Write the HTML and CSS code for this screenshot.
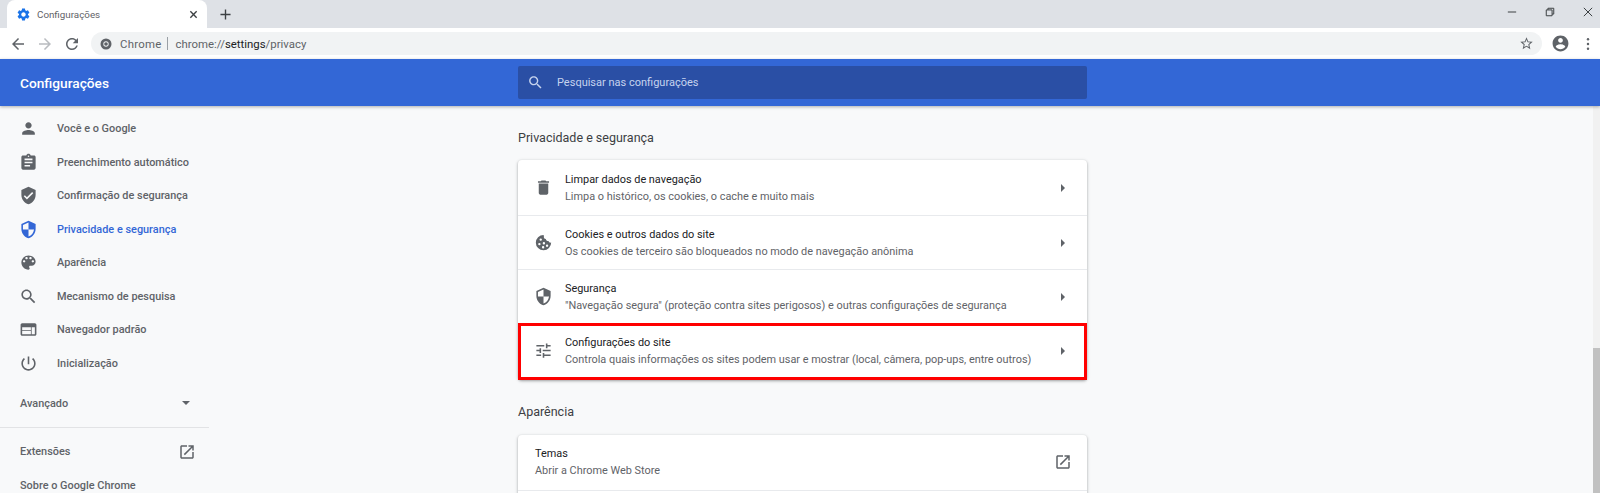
FILE: index.html
```html
<!DOCTYPE html>
<html lang="pt-BR">
<head>
    <meta charset="UTF-8">
    <title>Configurações</title>
    <link rel="stylesheet" href="styles.css">
</head>
<body>
<svg class="defs" width="0" height="0">
    <symbol id="i-gear" viewBox="0 0 24 24"><path d="M19.14 12.94c.04-.3.06-.61.06-.94 0-.32-.02-.64-.07-.94l2.03-1.58c.18-.14.23-.41.12-.61l-1.92-3.32c-.12-.22-.37-.29-.59-.22l-2.39.96c-.5-.38-1.03-.7-1.62-.94l-.36-2.54c-.04-.24-.24-.41-.48-.41h-3.84c-.24 0-.43.17-.47.41l-.36 2.54c-.59.24-1.13.57-1.62.94l-2.39-.96c-.22-.08-.47 0-.59.22L2.74 8.87c-.12.21-.08.47.12.61l2.03 1.58c-.05.3-.09.63-.09.94s.02.64.07.94l-2.03 1.58c-.18.14-.23.41-.12.61l1.92 3.32c.12.22.37.29.59.22l2.39-.96c.5.38 1.03.7 1.62.94l.36 2.54c.05.24.24.41.48.41h3.84c.24 0 .44-.17.47-.41l.36-2.54c.59-.24 1.13-.56 1.62-.94l2.39.96c.22.08.47 0 .59-.22l1.92-3.32c.12-.22.07-.47-.12-.61l-2.01-1.58zM12 15.6c-1.98 0-3.6-1.62-3.6-3.6s1.62-3.6 3.6-3.6 3.6 1.62 3.6 3.6-1.62 3.6-3.6 3.6z"/></symbol>
    <symbol id="i-person" viewBox="0 0 24 24"><path d="M12 12c2.21 0 4-1.79 4-4s-1.79-4-4-4-4 1.79-4 4 1.79 4 4 4zm0 2c-2.67 0-8 1.34-8 4v2h16v-2c0-2.66-5.33-4-8-4z"/></symbol>
    <symbol id="i-assignment" viewBox="0 0 24 24"><path d="M19 3h-4.18C14.4 1.84 13.3 1 12 1c-1.3 0-2.4.84-2.82 2H5c-1.1 0-2 .9-2 2v14c0 1.1.9 2 2 2h14c1.1 0 2-.9 2-2V5c0-1.1-.9-2-2-2zm-7 0c.55 0 1 .45 1 1s-.45 1-1 1-1-.45-1-1 .45-1 1-1zm2 14H7v-2h7v2zm3-4H7v-2h10v2zm0-4H7V7h10v2z"/></symbol>
    <symbol id="i-verified" viewBox="0 0 24 24"><path d="M12 1L3 5v6c0 5.55 3.84 10.74 9 12 5.16-1.26 9-6.45 9-12V5l-9-4zm-2 16l-4-4 1.41-1.41L10 14.17l6.59-6.59L18 9l-8 8z"/></symbol>
    <symbol id="i-security" viewBox="0 0 24 24"><path d="M12 1L3 5v6c0 5.55 3.84 10.74 9 12 5.16-1.26 9-6.45 9-12V5l-9-4zm0 10.99h7c-.53 4.12-3.28 7.79-7 8.94V12H5V6.3l7-3.11v8.8z"/></symbol>
    <symbol id="i-palette" viewBox="0 0 24 24"><path d="M12 3c-4.97 0-9 4.03-9 9s4.03 9 9 9c.83 0 1.5-.67 1.5-1.5 0-.39-.15-.74-.39-1.01-.23-.26-.38-.61-.38-.99 0-.83.67-1.5 1.5-1.5H16c2.76 0 5-2.24 5-5 0-4.42-4.03-8-9-8zm-5.5 9c-.83 0-1.5-.67-1.5-1.5S5.67 9 6.5 9 8 9.67 8 10.5 7.33 12 6.5 12zm3-4C8.67 8 8 7.33 8 6.5S8.67 5 9.5 5s1.5.67 1.5 1.5S10.33 8 9.5 8zm5 0c-.83 0-1.5-.67-1.5-1.5S13.67 5 14.5 5s1.5.67 1.5 1.5S15.33 8 14.5 8zm3 4c-.83 0-1.5-.67-1.5-1.5S16.67 9 17.5 9s1.5.67 1.5 1.5-.67 1.5-1.5 1.5z"/></symbol>
    <symbol id="i-search" viewBox="0 0 24 24"><path d="M15.5 14h-.79l-.28-.27C15.41 12.59 16 11.11 16 9.5 16 5.91 13.09 3 9.5 3S3 5.91 3 9.5 5.91 16 9.5 16c1.61 0 3.09-.59 4.23-1.57l.27.28v.79l5 4.99L20.49 19l-4.99-5zm-6 0C7.01 14 5 11.99 5 9.5S7.01 5 9.5 5 14 7.01 14 9.5 11.99 14 9.5 14z"/></symbol>
    <symbol id="i-web" viewBox="0 0 24 24"><path d="M20 4H4c-1.1 0-1.99.9-1.99 2L2 18c0 1.1.9 2 2 2h16c1.1 0 2-.9 2-2V6c0-1.1-.9-2-2-2zm-5 14H4v-4h11v4zm0-5H4V9h11v4zm5 5h-4V9h4v9z"/></symbol>
    <symbol id="i-power" viewBox="0 0 24 24"><path d="M13 3h-2v10h2V3zm4.83 2.17l-1.42 1.42C17.99 7.86 19 9.81 19 12c0 3.87-3.13 7-7 7s-7-3.13-7-7c0-2.19 1.01-4.14 2.58-5.42L6.17 5.17C4.23 6.82 3 9.26 3 12c0 4.97 4.03 9 9 9s9-4.03 9-9c0-2.74-1.23-5.18-3.17-6.83z"/></symbol>
    <symbol id="i-open" viewBox="0 0 24 24"><path d="M19 19H5V5h7V3H5c-1.11 0-2 .9-2 2v14c0 1.1.89 2 2 2h14c1.1 0 2-.9 2-2v-7h-2v7zM14 3v2h3.59l-9.83 9.83 1.41 1.41L19 6.41V10h2V3h-7z"/></symbol>
    <symbol id="i-delete" viewBox="0 0 24 24"><path d="M6 19c0 1.1.9 2 2 2h8c1.1 0 2-.9 2-2V7H6v12zM19 4h-3.5l-1-1h-5l-1 1H5v2h14V4z"/></symbol>
    <symbol id="i-tune" viewBox="0 0 24 24"><path d="M3 17v2h6v-2H3zM3 5v2h10V5H3zm10 16v-2h8v-2h-8v-2h-2v6h2zM7 9v2H3v2h4v2h2V9H7zm14 4v-2H11v2h10zm-6-4h2V7h4V5h-4V3h-2v6z"/></symbol>
    <symbol id="i-cookie" viewBox="0 0 24 24"><path fill-rule="evenodd" d="M12 2.5a9.7 9.7 0 1 0 9.7 9.6c-1.6.4-3-.5-3.3-2-1.7.3-3.3-.8-3.5-2.6-1.7-.1-2.8-1.6-2.4-3.2-.1-.9-.3-1.8-.5-1.8zM8.5 6.8a1.5 1.5 0 1 1 0 3 1.5 1.5 0 0 1 0-3zM6.8 12.5a1.5 1.5 0 1 1 0 3 1.5 1.5 0 0 1 0-3zM12.5 11.5a1.5 1.5 0 1 1 0 3 1.5 1.5 0 0 1 0-3zM11.5 16.5a1.5 1.5 0 1 1 0 3 1.5 1.5 0 0 1 0-3zM16.5 14.5a1.5 1.5 0 1 1 0 3 1.5 1.5 0 0 1 0-3z"/></symbol>
    <symbol id="i-back" viewBox="0 0 24 24"><path d="M20 11H7.83l5.59-5.59L12 4l-8 8 8 8 1.41-1.41L7.83 13H20v-2z"/></symbol>
    <symbol id="i-forward" viewBox="0 0 24 24"><path d="M12 4l-1.41 1.41L16.17 11H4v2h12.17l-5.58 5.59L12 20l8-8z"/></symbol>
    <symbol id="i-reload" viewBox="0 0 24 24"><path d="M17.65 6.35C16.2 4.9 14.21 4 12 4c-4.42 0-7.99 3.58-7.99 8s3.57 8 7.99 8c3.73 0 6.84-2.55 7.73-6h-2.08c-.82 2.33-3.04 4-5.65 4-3.31 0-6-2.69-6-6s2.69-6 6-6c1.66 0 3.14.69 4.22 1.78L13 11h7V4l-2.35 2.35z"/></symbol>
    <symbol id="i-star" viewBox="0 0 24 24"><path d="M22 9.24l-7.19-.62L12 2 9.19 8.63 2 9.24l5.46 4.73L5.82 21 12 17.27 18.18 21l-1.63-7.03L22 9.24zM12 15.4l-3.76 2.27 1-4.28-3.32-2.88 4.38-.38L12 6.1l1.71 4.04 4.38.38-3.32 2.88 1 4.28L12 15.4z"/></symbol>
    <symbol id="i-account" viewBox="0 0 24 24"><path d="M12 2C6.48 2 2 6.48 2 12s4.48 10 10 10 10-4.48 10-10S17.52 2 12 2zm0 3c1.66 0 3 1.34 3 3s-1.34 3-3 3-3-1.34-3-3 1.34-3 3-3zm0 14.2c-2.5 0-4.71-1.28-6-3.22.03-1.99 4-3.08 6-3.08 1.99 0 5.97 1.09 6 3.08-1.29 1.94-3.5 3.22-6 3.22z"/></symbol>
</svg>

<div class="tabstrip">
    <div class="tab">
        <svg class="tab-icon"><use href="#i-gear"/></svg>
        <span class="tab-title">Configurações</span>
        <svg class="tab-close" viewBox="0 0 10 10"><path d="M1.5 1.5l7 7M8.5 1.5l-7 7"/></svg>
    </div>
    <svg class="new-tab" viewBox="0 0 12 12"><path d="M6 .5v11M.5 6h11"/></svg>
    <div class="window-btns">
        <svg class="win-btn" viewBox="0 0 12 12"><path d="M1 6h10"/></svg>
        <svg class="win-btn" viewBox="0 0 12 12"><path d="M1.5 3.5h7v7h-7zM3.5 3.5v-2h7v7h-2"/></svg>
        <svg class="win-btn" viewBox="0 0 12 12"><path d="M1 1l10 10M11 1L1 11"/></svg>
    </div>
</div>

<div class="toolbar">
    <svg class="nav-icon"><use href="#i-back"/></svg>
    <svg class="nav-icon disabled"><use href="#i-forward"/></svg>
    <svg class="nav-icon"><use href="#i-reload"/></svg>
    <div class="omnibox">
        <svg class="chrome-logo" viewBox="0 0 12 12"><circle cx="6" cy="6" r="5.5"/><circle class="hole" cx="6" cy="6" r="2.7"/><circle cx="6" cy="6" r="1.8"/></svg>
        <span class="omni-label">Chrome</span>
        <span class="omni-sep"></span>
        <span class="omni-url">chrome://<b>settings</b>/privacy</span>
        <svg class="star"><use href="#i-star"/></svg>
    </div>
    <svg class="account"><use href="#i-account"/></svg>
    <svg class="menu-dots" viewBox="0 0 4 16"><circle cx="2" cy="2.5" r="1.4"/><circle cx="2" cy="8" r="1.4"/><circle cx="2" cy="13.5" r="1.4"/></svg>
</div>

<header class="settings-header">
    <h1>Configurações</h1>
    <div class="searchbox">
        <svg><use href="#i-search"/></svg>
        <span>Pesquisar nas configurações</span>
    </div>
</header>

<div class="content">
    <nav class="sidebar">
        <a class="nav-item"><svg><use href="#i-person"/></svg>Você e o Google</a>
        <a class="nav-item"><svg><use href="#i-assignment"/></svg>Preenchimento automático</a>
        <a class="nav-item"><svg><use href="#i-verified"/></svg>Confirmação de segurança</a>
        <a class="nav-item active"><svg><use href="#i-security"/></svg>Privacidade e segurança</a>
        <a class="nav-item"><svg><use href="#i-palette"/></svg>Aparência</a>
        <a class="nav-item"><svg><use href="#i-search"/></svg>Mecanismo de pesquisa</a>
        <a class="nav-item"><svg><use href="#i-web"/></svg>Navegador padrão</a>
        <a class="nav-item"><svg><use href="#i-power"/></svg>Inicialização</a>
        <a class="nav-plain advanced">Avançado<span class="caret"></span></a>
        <hr class="nav-line">
        <a class="nav-plain">Extensões<svg><use href="#i-open"/></svg></a>
        <a class="nav-plain">Sobre o Google Chrome</a>
    </nav>

    <main class="main">
        <h2 class="section-title">Privacidade e segurança</h2>
        <section class="card">
            <div class="row">
                <svg class="row-icon"><use href="#i-delete"/></svg>
                <div class="row-text"><div class="row-name">Limpar dados de navegação</div><div class="row-sub">Limpa o histórico, os cookies, o cache e muito mais</div></div>
                <span class="arrow"></span>
            </div>
            <div class="row">
                <svg class="row-icon"><use href="#i-cookie"/></svg>
                <div class="row-text"><div class="row-name">Cookies e outros dados do site</div><div class="row-sub">Os cookies de terceiro são bloqueados no modo de navegação anônima</div></div>
                <span class="arrow"></span>
            </div>
            <div class="row">
                <svg class="row-icon"><use href="#i-security"/></svg>
                <div class="row-text"><div class="row-name">Segurança</div><div class="row-sub">"Navegação segura" (proteção contra sites perigosos) e outras configurações de segurança</div></div>
                <span class="arrow"></span>
            </div>
            <div class="row marked">
                <svg class="row-icon"><use href="#i-tune"/></svg>
                <div class="row-text"><div class="row-name">Configurações do site</div><div class="row-sub">Controla quais informações os sites podem usar e mostrar (local, câmera, pop-ups, entre outros)</div></div>
                <span class="arrow"></span>
            </div>
        </section>

        <h2 class="section-title second">Aparência</h2>
        <section class="card">
            <div class="row plain">
                <div class="row-text"><div class="row-name">Temas</div><div class="row-sub">Abrir a Chrome Web Store</div></div>
                <svg class="row-open"><use href="#i-open"/></svg>
            </div>
            <div class="row plain"></div>
        </section>
    </main>

    <div class="scrollbar"><div class="thumb"></div></div>
</div>
</body>
</html>
```

FILE: styles.css
```css
html, body {
    margin: 0;
    height: 493px;
    overflow: hidden;
}

body {
    font-family: Roboto, "Liberation Sans", sans-serif;
    background-color: #f8f9fa;
    color: #202124;
    display: flex;
    flex-direction: column;
}

.defs {
    display: none;
}

svg {
    fill: currentColor;
    flex: none;
}

/* browser frame */
.tabstrip {
    height: 28px;
    flex: none;
    background-color: #dee1e6;
    display: flex;
    align-items: center;
    padding-left: 7px;
}

.tab {
    width: 200px;
    height: 28px;
    box-sizing: border-box;
    background-color: #fff;
    border-radius: 8px 8px 0 0;
    display: flex;
    align-items: center;
    padding: 0 8px 0 9px;
    color: #3c4043;
}

.tab-icon {
    width: 15px;
    height: 15px;
    color: #1a73e8;
}

.tab-title {
    font-size: 9.8px;
    margin-left: 6px;
    flex: 1;
    color: #5f6368;
}

.tab-close {
    width: 9px;
    height: 9px;
    fill: none;
    stroke: #3c4043;
    stroke-width: 1.5;
    margin-right: 1px;
}

.new-tab {
    width: 11px;
    height: 11px;
    margin-left: 13px;
    fill: none;
    stroke: #3c4043;
    stroke-width: 1.5;
}

.window-btns {
    margin-left: auto;
    display: flex;
    gap: 28px;
    padding-right: 7px;
    margin-top: -4px;
}

.win-btn {
    width: 10px;
    height: 10px;
    fill: none;
    stroke: #3c4043;
    stroke-width: 1.2;
}

.toolbar {
    height: 31px;
    flex: none;
    background-color: #fff;
    display: flex;
    align-items: center;
    padding-left: 9px;
    box-sizing: border-box;
}

.nav-icon {
    width: 18px;
    height: 18px;
    color: #5f6368;
    margin-right: 9px;
}

.nav-icon.disabled {
    color: #b9bcc0;
}

.omnibox {
    margin-left: 1px;
    width: 1451px;
    height: 23px;
    border-radius: 12px;
    background-color: #f1f3f4;
    display: flex;
    align-items: center;
    padding: 0 8px 0 8px;
    box-sizing: border-box;
    font-size: 11.4px;
    color: #5f6368;
}

.chrome-logo {
    width: 12px;
    height: 12px;
    margin-left: 1px;
    color: #5f6368;
}

.chrome-logo .hole {
    fill: #f1f3f4;
}

.omni-label {
    margin-left: 8px;
    letter-spacing: .25px;
}

.omni-sep {
    width: 1px;
    height: 13px;
    background-color: #9aa0a6;
    margin: 0 7px 0 6px;
}

.omni-url b {
    font-weight: 400;
    color: #202124;
}

.star {
    width: 15px;
    height: 15px;
    margin-left: auto;
}

.account {
    width: 19px;
    height: 19px;
    margin-left: 9px;
    color: #5f6368;
}

.menu-dots {
    width: 4px;
    height: 14px;
    margin-left: 16px;
    color: #5f6368;
}

/* settings header */
.settings-header {
    height: 47px;
    flex: none;
    background-color: #3367d6;
    display: flex;
    align-items: center;
    padding-left: 20px;
    box-shadow: 0 1px 3px rgba(60, 64, 67, .4);
    position: relative;
}

.settings-header h1 {
    width: 498px;
    margin: 0;
    font-size: 13.7px;
    font-weight: 500;
    color: #fff;
}

.searchbox {
    width: 569px;
    height: 33px;
    background-color: #2a4fa5;
    border-radius: 2px;
    display: flex;
    align-items: center;
    padding-left: 9px;
    box-sizing: border-box;
    font-size: 11px;
    color: #c6d3ee;
}

.searchbox svg {
    width: 17px;
    height: 17px;
    margin-right: 13px;
}

/* page body */
.content {
    flex: 1;
    min-height: 0;
    display: flex;
    overflow: hidden;
}

.sidebar {
    width: 209px;
    flex: none;
    padding-top: 6px;
    font-size: 10.9px;
    font-weight: 500;
    color: #5f6368;
}

.nav-item,
.nav-plain {
    height: 33.5px;
    display: flex;
    align-items: center;
}

.nav-item svg {
    width: 19px;
    height: 19px;
    margin: 0 19.5px 0 18.5px;
}

.nav-item.active {
    color: #3367d6;
}

.nav-plain {
    padding: 0 13px 0 20px;
    justify-content: space-between;
}

.nav-plain svg {
    width: 18px;
    height: 18px;
}

.advanced {
    margin-top: 6.5px;
}

.caret {
    width: 0;
    height: 0;
    border: 4px solid transparent;
    border-top-color: #5f6368;
    border-bottom-width: 0;
    margin-right: 6px;
}

.nav-line {
    margin: 7px 0;
    border: 0;
    border-top: 1px solid #e2e3e5;
}

.main {
    flex: 1;
    padding: 22px 0 0 309px;
}

.section-title {
    margin: 0 0 12px;
    font-size: 12.5px;
    line-height: 20px;
    font-weight: 400;
    color: #3c4043;
}

.section-title.second {
    margin: 22px 0 13px;
}

.card {
    width: 569px;
    background-color: #fff;
    border-radius: 4px;
    box-shadow: 0 1px 2px rgba(60, 64, 67, .3), 0 1px 3px 1px rgba(60, 64, 67, .15);
}

.row {
    height: 54px;
    box-sizing: border-box;
    display: flex;
    align-items: center;
    padding: 0 20px 0 15px;
    border-top: 1px solid #e8eaed;
}

.row:first-child {
    border-top: 0;
    height: 55px;
}

.row.marked {
    height: 57px;
    border: 3px solid #f00;
    padding: 0 17px 2px 12px;
}

.row.plain {
    padding: 0 20px 2px 17px;
}

.row-icon {
    width: 19px;
    height: 19px;
    color: #5f6368;
    margin-right: 12px;
    margin-left: 1px;
}

.row-text {
    flex: 1;
    font-size: 10.9px;
    line-height: 17px;
}

.row-name {
    color: #202124;
}

.row-sub {
    color: #5f6368;
}

.arrow {
    width: 0;
    height: 0;
    border: 4px solid transparent;
    border-left-color: #5f6368;
    border-right-width: 0;
    margin-right: 2px;
}

.row-open {
    width: 18px;
    height: 18px;
    color: #5f6368;
    margin-right: -5px;
}

.scrollbar {
    width: 7px;
    flex: none;
    background-color: #f1f1f1;
    display: flex;
    flex-direction: column;
    padding-top: 242px;
    box-sizing: border-box;
}

.thumb {
    flex: 1;
    background-color: #c1c1c1;
}
```
